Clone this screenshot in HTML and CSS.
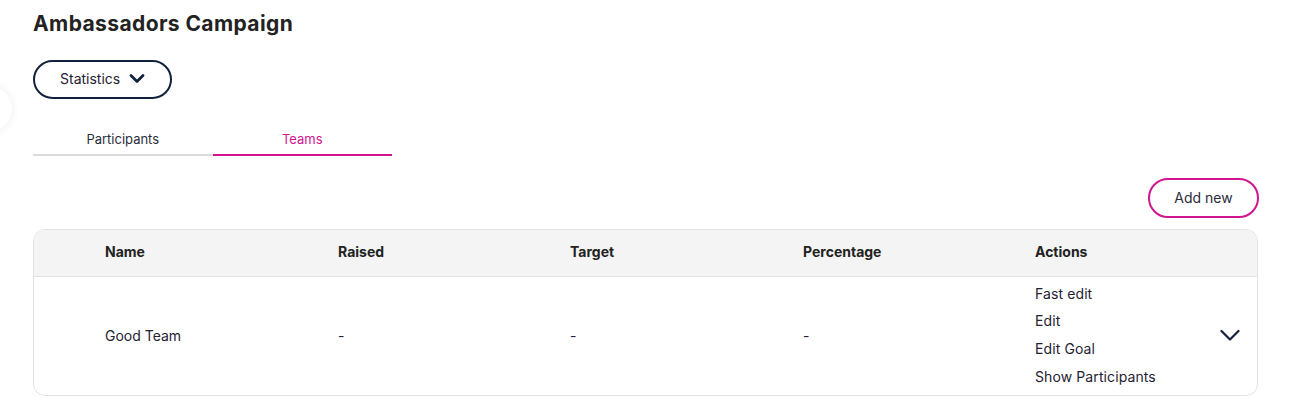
FILE: index.html
```html
<!DOCTYPE html>
<html lang="en">
<head>
    <meta charset="UTF-8">
    <meta name="viewport" content="width=device-width, initial-scale=1.0">
    <title>Ambassadors Campaign</title>
    <link rel="stylesheet" href="styles.css">
</head>
<body>
    <div class="side-toggle"></div>
    <div class="page">
        <h1 class="title">Ambassadors Campaign</h1>

        <button class="stats-btn">
            Statistics
            <svg width="16" height="11" viewBox="0 0 16 11"><path d="M2 2.5 L8 8.5 L14 2.5" fill="none" stroke="#14213d" stroke-width="2.8" stroke-linecap="round" stroke-linejoin="round"/></svg>
        </button>

        <div class="tabs">
            <div class="tab">Participants</div>
            <div class="tab active">Teams</div>
        </div>

        <div class="toolbar">
            <button class="add-btn">Add new</button>
        </div>

        <div class="table">
            <div class="row head">
                <div>Name</div>
                <div>Raised</div>
                <div>Target</div>
                <div>Percentage</div>
                <div>Actions</div>
            </div>
            <div class="row body">
                <div>Good Team</div>
                <div>-</div>
                <div>-</div>
                <div>-</div>
                <div class="actions">
                    <ul class="action-list">
                        <li>Fast edit</li>
                        <li>Edit</li>
                        <li>Edit Goal</li>
                        <li>Show Participants</li>
                    </ul>
                    <svg class="row-toggle" width="20" height="13" viewBox="0 0 20 13"><path d="M1.5 2 L10 10.5 L18.5 2" fill="none" stroke="#14213d" stroke-width="2.2" stroke-linecap="round" stroke-linejoin="round"/></svg>
                </div>
            </div>
        </div>
    </div>
</body>
</html>
```

FILE: styles.css
```css
* {
    margin: 0;
    padding: 0;
    box-sizing: border-box;
}
body {
    font-family: Inter, "Noto Sans", sans-serif;
    color: #1f2233;
    background: #fff;
    overflow: hidden;
}
.side-toggle {
    position: absolute;
    left: -34px;
    top: 86px;
    width: 46px;
    height: 46px;
    border-radius: 50%;
    background: #fff;
    box-shadow: 0 0 10px rgba(0, 0, 0, 0.08);
}
.page {
    padding: 11px 40px 0 33px;
}
.title {
    font-size: 21px;
    font-weight: 700;
    line-height: 26px;
    color: #222;
    letter-spacing: 0.4px;
}
.stats-btn {
    margin-top: 23px;
    display: flex;
    align-items: center;
    gap: 9px;
    height: 39px;
    width: 139px;
    padding-left: 25px;
    padding-bottom: 2px;
    border: 2px solid #14213d;
    border-radius: 20px;
    background: #fff;
    font-family: inherit;
    font-size: 14px;
    color: #1f2233;
}
.tabs {
    margin-top: 32px;
    display: flex;
}
.tab {
    width: 179.5px;
    text-align: center;
    font-size: 13px;
    line-height: 16px;
    padding-bottom: 7px;
    border-bottom: 2px solid #dcdcdc;
    color: #2a2d3a;
}
.tab.active {
    color: #d0168f;
    border-bottom-color: #d0168f;
}
.toolbar {
    margin-top: 22px;
    display: flex;
    justify-content: flex-end;
}
.add-btn {
    width: 111px;
    height: 40px;
    margin-right: -1px;
    padding-bottom: 1px;
    border: 2px solid #d0168f;
    border-radius: 20px;
    background: #fff;
    font-family: inherit;
    font-size: 14px;
    color: #2a2d3a;
}
.table {
    margin-top: 11px;
    border: 1px solid #e3e3e3;
    border-radius: 12px;
    overflow: hidden;
}
.row {
    display: grid;
    grid-template-columns: 233px 232px 233px 232px 1fr;
    padding-left: 71px;
    font-size: 14px;
}
.row.head {
    background: #f4f4f4;
    height: 47px;
    padding-bottom: 3px;
    align-items: center;
    font-weight: 700;
    color: #222;
    border-bottom: 1px solid #e3e3e3;
}
.row.body {
    height: 118px;
    padding-bottom: 2px;
    align-items: center;
    color: #1f2233;
}
.actions {
    display: flex;
    align-items: center;
    justify-content: space-between;
    padding-right: 17px;
}
.action-list {
    list-style: none;
}
.action-list li {
    line-height: 27.7px;
    letter-spacing: 0.1px;
}
```
